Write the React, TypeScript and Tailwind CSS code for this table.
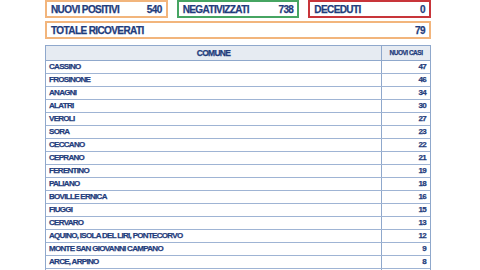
import React from 'react';

const rows: [string, number][] = [
  ['CASSINO', 47],
  ['FROSINONE', 46],
  ['ANAGNI', 34],
  ['ALATRI', 30],
  ['VEROLI', 27],
  ['SORA', 23],
  ['CECCANO', 22],
  ['CEPRANO', 21],
  ['FERENTINO', 19],
  ['PALIANO', 18],
  ['BOVILLE ERNICA', 16],
  ['FIUGGI', 15],
  ['CERVARO', 13],
  ['AQUINO, ISOLA DEL LIRI, PONTECORVO', 12],
  ['MONTE SAN GIOVANNI CAMPANO', 9],
  ['ARCE, ARPINO', 8],
];

const Stat: React.FC<{ label: string; value: number; color: string }> = ({ label, value, color }) => (
  <div className={`flex h-[18px] items-center justify-between border-2 px-[4px] ${color}`}>
    <span>{label}</span>
    <span>{value}</span>
  </div>
);

export default function App() {
  return (
    <div
      className="h-[270px] w-[480px] overflow-hidden bg-white font-bold text-[#1f3c7c] [-webkit-text-stroke:0.25px_#1f3c7c]"
      style={{ fontFamily: '"Liberation Sans", Arial, sans-serif' }}
    >
      <div className="ml-[45px] w-[386px]">
        <div className="grid grid-cols-3 gap-[9px] text-[10px] tracking-[-0.6px]">
          <Stat label="NUOVI POSITIVI" value={540} color="border-[#f2b57c]" />
          <Stat label="NEGATIVIZZATI" value={738} color="border-[#46a562]" />
          <Stat label="DECEDUTI" value={0} color="border-[#c8353a]" />
        </div>
        <div className="mt-[3px] flex h-[18px] items-center justify-between border-2 border-[#f2b57c] px-[4px] text-[10px] tracking-[-0.6px]">
          <span>TOTALE RICOVERATI</span>
          <span>79</span>
        </div>
        <div className="mt-[6px] border border-b-0 border-[#8fa8cc] text-[8px] tracking-[-0.7px]">
          <div className="flex h-[15px] items-center border-b border-[#8fa8cc] bg-[#e6ebf2]">
            <div className="flex-1 text-center text-[8.5px]">COMUNE</div>
            <div className="flex h-full w-[49px] items-center justify-center border-l border-[#8fa8cc] text-[6.5px] tracking-[-0.5px]">
              NUOVI CASI
            </div>
          </div>
          {rows.map(([name, n]) => (
            <div key={name} className="flex h-[13px] items-center border-b border-[#9fb4d4]">
              <div className="flex-1 pl-[3px]">{name}</div>
              <div className="flex h-full w-[49px] items-center justify-end border-l border-[#8fa8cc] pr-[4px]">
                {n}
              </div>
            </div>
          ))}
          <div className="flex h-[13px]">
            <div className="flex-1" />
            <div className="w-[49px] border-l border-[#8fa8cc]" />
          </div>
        </div>
      </div>
    </div>
  );
}
